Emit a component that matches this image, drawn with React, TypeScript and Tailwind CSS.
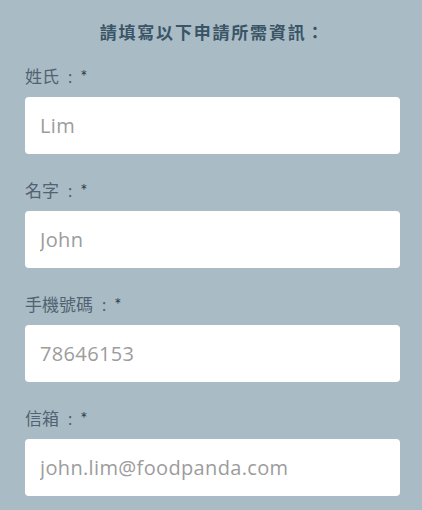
import React from "react";

const fields = [
  { label: "姓氏", placeholder: "Lim", type: "text" },
  { label: "名字", placeholder: "John", type: "text" },
  { label: "手機號碼", placeholder: "78646153", type: "tel" },
  { label: "信箱", placeholder: "john.lim@foodpanda.com", type: "email" },
];

export default function App() {
  return (
    <div
      className="min-h-[510px] w-[422px] bg-[#a9bcc6] pl-[25px] pr-[22px] pt-[20px]"
      style={{ fontFamily: "Lato, 'Noto Sans CJK TC', sans-serif" }}
    >
      <h2 className="text-center text-[17px] font-bold leading-[26px] text-[#3b5567] tracking-[1.8px]">
        請填寫以下申請所需資訊：
      </h2>
      <form className="mt-[18px] flex flex-col gap-[23.6px]">
        {fields.map((f) => (
          <div key={f.label}>
            <label className="flex items-center text-[17px] leading-[26px] text-[#526270]">
              {f.label}
              <span className="ml-[9px]">:</span>
              <span className="ml-[8px] text-[#2a3a45]">*</span>
            </label>
            <input
              type={f.type}
              placeholder={f.placeholder}
              className="mt-[7.4px] block h-[57px] w-full rounded-[4px] bg-white px-[15px] text-[20px] tracking-[0.35px] text-[#555] placeholder:text-[#9c9c9c] outline-none"
              style={{ fontFamily: "'Open Sans', sans-serif" }}
            />
          </div>
        ))}
      </form>
    </div>
  );
}
